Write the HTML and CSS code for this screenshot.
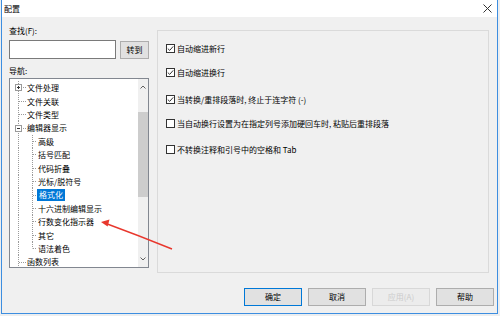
FILE: index.html
```html
<!DOCTYPE html>
<html lang="zh">
<head>
<meta charset="utf-8">
<link rel="stylesheet" href="styles.css">
</head>
<body>
<div class="win">
  <div class="titlebar">
    <span class="title">配置</span>
    <svg class="close" width="9" height="9" viewBox="0 0 9 9"><path d="M0.5 0.5 L8.5 8.5 M8.5 0.5 L0.5 8.5" stroke="#333" stroke-width="1"/></svg>
  </div>
  <div class="main">
    <div class="left">
      <div class="lbl">查找(F):</div>
      <div class="find">
        <div class="input"></div>
        <button class="btn go">转到</button>
      </div>
      <div class="lbl nav">导航:</div>
      <div class="tree">
        <div class="items">
          <div class="row l0"><span class="tw"><svg class="box" width="7" height="7" viewBox="0 0 7 7"><rect x="0.5" y="0.5" width="6" height="6" fill="#fff" stroke="#9a9a9a"/><path d="M2 3.5 H5 M3.5 2 V5" stroke="#333"/></svg></span>文件处理</div>
          <div class="row l0"><span class="tw"></span>文件关联</div>
          <div class="row l0"><span class="tw"></span>文件类型</div>
          <div class="row l0"><span class="tw"><svg class="box" width="7" height="7" viewBox="0 0 7 7"><rect x="0.5" y="0.5" width="6" height="6" fill="#fff" stroke="#9a9a9a"/><path d="M2 3.5 H5" stroke="#333"/></svg></span>编辑器显示</div>
          <div class="row l1">高级</div>
          <div class="row l1">括号匹配</div>
          <div class="row l1">代码折叠</div>
          <div class="row l1">光标/脱符号</div>
          <div class="row l1 selrow"><span class="sel">格式化</span></div>
          <div class="row l1">十六进制编辑显示</div>
          <div class="row l1">行数变化指示器</div>
          <div class="row l1">其它</div>
          <div class="row l1 last">语法着色</div>
          <div class="row l0"><span class="tw"></span>函数列表</div>
        </div>
        <div class="sb">
          <span class="arr"><svg width="6" height="4" viewBox="0 0 6 4"><path d="M0.5 3.5 L3 1 L5.5 3.5" fill="none" stroke="#606060"/></svg></span>
          <span class="thumb"></span>
          <span class="fill"></span>
          <span class="arr"><svg width="6" height="4" viewBox="0 0 6 4"><path d="M0.5 0.5 L3 3 L5.5 0.5" fill="none" stroke="#606060"/></svg></span>
        </div>
      </div>
    </div>
    <div class="group">
      <div class="chk"><span class="cb on"><svg width="7" height="7" viewBox="0 0 7 7"><path d="M0.8 3.6 L2.7 5.4 L6.2 1.4" fill="none" stroke="#333" stroke-width="1"/></svg></span>自动缩进新行</div>
      <div class="chk"><span class="cb on"><svg width="7" height="7" viewBox="0 0 7 7"><path d="M0.8 3.6 L2.7 5.4 L6.2 1.4" fill="none" stroke="#333" stroke-width="1"/></svg></span>自动缩进换行</div>
      <div class="chk more"><span class="cb on"><svg width="7" height="7" viewBox="0 0 7 7"><path d="M0.8 3.6 L2.7 5.4 L6.2 1.4" fill="none" stroke="#333" stroke-width="1"/></svg></span>当转换/重排段落时, 终止于连字符 (-)</div>
      <div class="chk"><span class="cb"></span>当自动换行设置为在指定列号添加硬回车时, 粘贴后重排段落</div>
      <div class="chk more2"><span class="cb"></span>不转换注释和引号中的空格和 Tab</div>
    </div>
  </div>
  <div class="buttons">
    <button class="btn def">确定</button>
    <button class="btn">取消</button>
    <button class="btn ghost">应用(A)</button>
    <button class="btn">帮助</button>
  </div>
  <svg class="arrow" width="497" height="314" viewBox="0 0 497 314">
    <path d="M104 223.5 Q138 236 170 249" fill="none" stroke="#e8372d" stroke-width="1.4"/>
    <polygon points="99,222 107.5,219.6 105.6,226.4" fill="#e8372d"/>
  </svg>
</div>
</body>
</html>
```
FILE: styles.css
```css
:root {
  --v: repeating-linear-gradient(to bottom, #9a9a9a 0 1px, transparent 1px 2px);
  --h: repeating-linear-gradient(to right, #9a9a9a 0 1px, transparent 1px 2px);
}
html, body {
  margin: 0;
  background: #eceef0;
}
body {
  font-family: "Noto Sans CJK SC", "Noto Sans", sans-serif;
  font-size: 8px;
  color: #000;
}
.win {
  position: relative;
  width: 495px;
  margin-left: 1px;
  border: 1px solid #3d8ee0;
  border-top: none;
  background: #f0f0f0;
  padding-bottom: 7px;
}
.titlebar {
  height: 17px;
  background: #fff;
  display: flex;
  align-items: center;
  justify-content: space-between;
  padding: 0 5px 0 2px;
}
.title {
  line-height: 10px;
}
.close {
  display: block;
}
.main {
  display: flex;
  align-items: flex-start;
  gap: 8px;
  padding: 9px 0 0 7px;
}
.left {
  width: 140px;
  display: flex;
  flex-direction: column;
}
.lbl {
  height: 10px;
  line-height: 10px;
}
.nav {
  margin-top: 7px;
}
.find {
  display: flex;
  align-items: center;
  gap: 4px;
  margin-top: 4px;
  height: 19px;
}
.input {
  width: 107px;
  height: 19px;
  box-sizing: border-box;
  background: #fff;
  border: 1px solid #7a7a7a;
}
.btn {
  width: 58px;
  height: 18px;
  box-sizing: border-box;
  border: 1px solid #adadad;
  background: #e1e1e1;
  font-family: inherit;
  font-size: 8px;
  color: #000;
  padding: 0;
  line-height: 10px;
}
.btn.go {
  width: 29px;
  height: 18px;
}
.btn.def {
  border-color: #0078d7;
}
.btn.ghost {
  background: #ececec;
  border-color: #d8d8d8;
  color: #cbcbcb;
}
.tree {
  margin-top: 2px;
  height: 190px;
  box-sizing: border-box;
  border: 1px solid #828790;
  background: #fff;
  display: flex;
  overflow: hidden;
}
.items {
  flex: 1;
  padding-top: 2.3px;
  overflow: hidden;
}
.row {
  height: 13.4px;
  line-height: 13.4px;
  display: flex;
  align-items: center;
  white-space: nowrap;
  background-repeat: no-repeat;
}
.row.l0 {
  background-image: var(--v), var(--h);
  background-position: 8px 0, 9px 50%;
  background-size: 1px 100%, 7px 1px;
}
.row.l1 {
  padding-left: 28px;
  background-image: var(--v), var(--v), var(--h);
  background-position: 8px 0, 22px 0, 23px 50%;
  background-size: 1px 100%, 1px 100%, 4px 1px;
}
.row.l1.last {
  background-size: 1px 100%, 1px 50%, 4px 1px;
}
.row.selrow {
  padding-left: 27px;
}
.tw {
  width: 17px;
  height: 100%;
  display: flex;
  align-items: center;
  flex: none;
}
.box {
  display: block;
  margin-left: 5px;
}
.sel {
  background: #0078d7;
  color: #fff;
  padding: 0 2px;
  line-height: 12px;
}
.sb {
  width: 10px;
  background: #f0f0f0;
  display: flex;
  flex-direction: column;
  align-items: center;
  flex: none;
}
.arr {
  height: 16px;
  display: flex;
  align-items: center;
  justify-content: center;
}
.arr svg {
  display: block;
}
.thumb {
  width: 10px;
  height: 85px;
  margin-top: 17px;
  background: #cdcdcd;
}
.fill {
  flex: 1;
}
.group {
  margin-top: 4px;
  width: 332px;
  height: 243px;
  box-sizing: border-box;
  border: 1px solid #dadada;
  padding: 11px 0 0 8px;
  display: flex;
  flex-direction: column;
  gap: 12px;
}
.chk {
  height: 12px;
  display: flex;
  align-items: center;
  gap: 2px;
  white-space: nowrap;
}
.chk.more {
  margin-top: 3px;
}
.chk.more2 {
  margin-top: 2px;
}
.cb {
  width: 9px;
  height: 9px;
  box-sizing: border-box;
  border: 1px solid #333;
  background: #fff;
  display: flex;
  align-items: center;
  justify-content: center;
  flex: none;
}
.cb svg {
  display: block;
}
.buttons {
  display: flex;
  justify-content: flex-end;
  gap: 6px;
  margin-top: 15px;
  padding-right: 3px;
  height: 18px;
}
.arrow {
  position: absolute;
  left: 0;
  top: 0;
  pointer-events: none;
}
```
